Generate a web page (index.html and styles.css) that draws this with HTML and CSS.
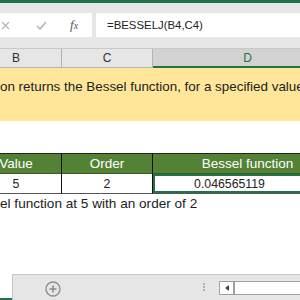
FILE: index.html
```html
<!DOCTYPE html>
<html lang="en">
<head>
    <meta charset="UTF-8">
    <title>BESSELJ</title>
    <link rel="stylesheet" href="styles.css">
</head>
<body>
    <div class="excel">
        <div class="ribbon-edge"></div>
        <div class="formula-bar">
            <div class="name-actions">
                <svg class="icon-x" width="9" height="9" viewBox="0 0 9 9"><path d="M1 1 L8 8 M8 1 L1 8" stroke="#b4b4b4" stroke-width="1.2" fill="none"/></svg>
                <svg class="icon-check" width="11" height="9" viewBox="0 0 11 9"><path d="M1 5 L4 8 L10 1" stroke="#b4b4b4" stroke-width="1.6" fill="none"/></svg>
                <span class="fx">f<span>x</span></span>
            </div>
            <div class="formula-input">=BESSELJ(B4,C4)</div>
        </div>

        <div class="sheet">
            <div class="grid">
                <div class="col-head">B</div>
                <div class="col-head">C</div>
                <div class="col-head active">D</div>

                <div class="note-band">on returns the Bessel function, for a specified value</div>

                <div class="blank-row"></div>

                <div class="th">Value</div>
                <div class="th">Order</div>
                <div class="th">Bessel function</div>

                <div class="td">5</div>
                <div class="td">2</div>
                <div class="td selected">0.046565119</div>

                <div class="caption">el function at 5 with an order of 2</div>
            </div>
        </div>

        <div class="sheet-tabs">
            <div class="tab-active"></div>
            <div class="tab-bar">
                <svg class="add-sheet" width="16" height="16" viewBox="0 0 16 16">
                    <circle cx="8" cy="8" r="7" stroke="#8c8c8c" stroke-width="1.3" fill="none"/>
                    <path d="M8 4.5 V11.5 M4.5 8 H11.5" stroke="#8c8c8c" stroke-width="1.6"/>
                </svg>
                <span class="splitter"></span>
                <div class="hscroll">
                    <span class="hscroll-btn"><svg width="4" height="6" viewBox="0 0 4 6"><path d="M4 0 L0 3 L4 6 Z" fill="#444"/></svg></span>
                </div>
            </div>
        </div>
    </div>
</body>
</html>
```

FILE: styles.css
```css
body {
    margin: 0;
    font-family: "Liberation Sans", Arial, sans-serif;
    background: #fff;
}
.excel {
    width: 300px;
    height: 300px;
    display: flex;
    flex-direction: column;
    overflow: hidden;
}
.ribbon-edge {
    height: 3px;
    background: #217346;
}
.formula-bar {
    background: #e6e6e6;
    padding: 10px 0 11px;
    display: flex;
    gap: 4px;
    border-bottom: 1px solid #c8c8c8;
}
.name-actions {
    width: 92px;
    height: 24px;
    background: #fff;
    display: flex;
    align-items: center;
    box-sizing: border-box;
    padding-left: 1px;
}
.icon-x {
    margin-right: 26px;
}
.icon-check {
    margin-right: 23px;
}
.fx {
    font-family: "Liberation Serif", serif;
    font-style: italic;
    font-size: 13px;
    color: #555;
}
.fx span {
    font-size: 10px;
}
.formula-input {
    flex: 1;
    height: 24px;
    background: #fff;
    font-size: 11.4px;
    line-height: 25px;
    padding-left: 11px;
    color: #222;
}
.sheet {
    flex: 1;
    overflow: hidden;
}
.grid {
    display: grid;
    grid-template-columns: 91px 91px 190px;
    margin-left: -29px;
    font-size: 13px;
    color: #222;
}
.col-head {
    height: 18px;
    line-height: 19px;
    background: #e6e6e6;
    text-align: center;
    border-right: 1px solid #b4b4b4;
    border-bottom: 1px solid #b4b4b4;
    color: #333;
    font-size: 12px;
}
.col-head.active {
    background: #d2d2d2;
    color: #217346;
    border-bottom: 2px solid #217346;
    height: 17px;
}
.note-band {
    grid-column: 1 / 4;
    height: 53px;
    background: #ffe699;
    line-height: 38px;
    padding-left: 29px;
    white-space: nowrap;
    font-size: 13.4px;
}
.blank-row {
    grid-column: 1 / 4;
    height: 32px;
    border-bottom: 1px solid #222;
}
.th, .td {
    height: 19px;
    line-height: 20px;
    text-align: center;
    border-right: 1px solid #111;
}
.th {
    background: #548235;
    color: #fff;
    border-bottom: 1px solid #3c5a26;
    font-size: 13.5px;
}
.td {
    border-bottom: 1px solid #555;
    font-size: 12.3px;
}
.td.selected {
    box-shadow: inset 0 0 0 2px #217346;
    padding-right: 36px;
}
.th:last-of-type {
    padding-right: 36px;
}
.caption {
    grid-column: 1 / 4;
    height: 20px;
    line-height: 20px;
    padding-left: 29px;
    white-space: nowrap;
    font-size: 13.6px;
}
.sheet-tabs {
    height: 26px;
    display: flex;
}
.tab-active {
    width: 12px;
    border-bottom: 2px solid #217346;
    box-sizing: border-box;
}
.tab-bar {
    flex: 1;
    background: #e6e6e6;
    border-top: 1px solid #c6c6c6;
    border-left: 1px solid #c6c6c6;
    display: flex;
    align-items: center;
}
.add-sheet {
    margin-left: 32px;
    margin-top: 2px;
}
.splitter {
    width: 2px;
    height: 9px;
    margin-left: 142px;
    background: repeating-linear-gradient(to bottom, #b0b0b0 0 2px, transparent 2px 3px);
}
.hscroll {
    margin-left: 14px;
    flex: 1;
    height: 12px;
    background: #fff;
    border: 1px solid #a0a0a0;
    border-right: none;
    margin-top: 1px;
}
.hscroll-btn {
    width: 13px;
    height: 12px;
    display: flex;
    align-items: center;
    justify-content: center;
    border-right: 2px solid #a0a0a0;
}
```
